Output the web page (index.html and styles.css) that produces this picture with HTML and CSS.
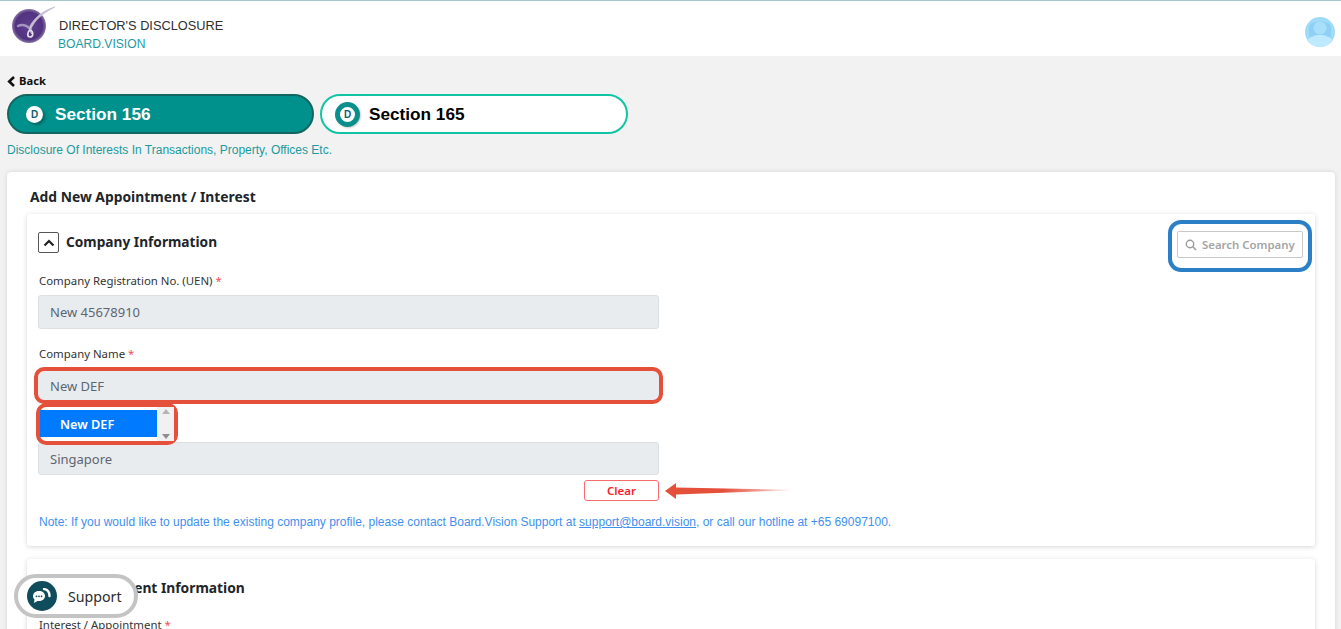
FILE: index.html
```html
<!DOCTYPE html>
<html lang="en">
<head>
  <meta charset="UTF-8" />
  <meta name="viewport" content="width=device-width, initial-scale=1.0" />
  <title>Director's Disclosure</title>
  <link rel="stylesheet" href="styles.css">
</head>
<body>
  <header class="topbar">
    <div class="brand">
      <svg class="logo" width="46" height="40" viewBox="0 0 46 40">
        <defs>
          <radialGradient id="orb" cx="50%" cy="50%" r="50%">
            <stop offset="0" stop-color="#5f3f8f" />
            <stop offset="0.8" stop-color="#523380" />
            <stop offset="1" stop-color="#8a76a6" />
          </radialGradient>
        </defs>
        <circle cx="18" cy="22" r="17" fill="url(#orb)" />
        <path d="M7 22 C11 20 16 21 19 25" fill="none" stroke="#a594bd" stroke-width="2.4" stroke-linecap="round" />
        <path d="M44 3 C33 6 24 13 19 22 C18 25 19 28 21 30 C19 27 20 24 22 21 C26 14 34 8 44 3 Z" fill="#c9bfd4" stroke="#c9bfd4" stroke-width="0.8" />
        <path d="M19 26 C16 28 16 33 19 33 C22 33 23 29 20 26" fill="none" stroke="#e6e0ec" stroke-width="1.7" />
      </svg>
      <div class="brand-text">
        <div class="brand-title">DIRECTOR'S DISCLOSURE</div>
        <div class="brand-sub">BOARD.VISION</div>
      </div>
    </div>
    <svg class="avatar" width="30" height="30" viewBox="0 0 30 30">
      <circle cx="15" cy="15" r="15" fill="#9fdcfa" />
      <path d="M4 9 C7 3 23 3 26 9 L26 20 L4 20 Z" fill="#8fd0f5" />
      <circle cx="15" cy="11" r="6.5" fill="#a8dff9" />
      <path d="M2 24 C6 19 10 18 15 18 C20 18 24 19 28 24 C24 28 20 30 15 30 C10 30 6 28 2 24 Z" fill="#bfe9fd" />
    </svg>
  </header>

  <main class="page">
    <a class="back"><svg width="9" height="11" viewBox="0 0 9 11"><path d="M7 1 L2.2 5.5 L7 10" fill="none" stroke="#111" stroke-width="2.6" /></svg>Back</a>

    <div class="tabs">
      <div class="tab tab-active"><span class="tab-dot">D</span>Section 156</div>
      <div class="tab"><span class="tab-dot">D</span>Section 165</div>
    </div>
    <p class="tab-note">Disclosure Of Interests In Transactions, Property, Offices Etc.</p>

    <section class="card">
      <h2 class="card-title">Add New Appointment / Interest</h2>

      <div class="panel">
        <div class="panel-head">
          <div class="panel-title">
            <span class="toggle"><svg width="12" height="8" viewBox="0 0 12 8"><path d="M1.5 6.5 L6 2 L10.5 6.5" fill="none" stroke="#222" stroke-width="2.2" /></svg></span>
            <h3>Company Information</h3>
          </div>
          <div class="search-ring">
            <div class="search">
              <svg width="12" height="12" viewBox="0 0 12 12"><circle cx="5" cy="5" r="3.7" fill="none" stroke="#9a9a9a" stroke-width="1.4" /><path d="M7.8 7.8 L11 11" stroke="#9a9a9a" stroke-width="1.6" /></svg>
              Search Company
            </div>
          </div>
        </div>

        <div class="field">
          <label>Company Registration No. (UEN) <i>*</i></label>
          <div class="input">New 45678910</div>
        </div>
        <div class="field field-name">
          <label>Company Name <i>*</i></label>
          <div class="input input-marked">New DEF</div>
          <div class="suggest">
            <div class="suggest-item">New DEF</div>
            <div class="suggest-scroll"><b class="up"></b><b class="down"></b></div>
          </div>
        </div>
        <div class="field">
          <label>&nbsp;</label>
          <div class="input input-short">Singapore</div>
        </div>
        <div class="actions">
          <button class="clear">Clear</button>
          <svg class="arrow" width="130" height="18" viewBox="0 0 130 18">
            <defs>
              <linearGradient id="fade" x1="0" x2="1" y1="0" y2="0">
                <stop offset="0" stop-color="#e4503a" />
                <stop offset="0.45" stop-color="#e4503a" />
                <stop offset="1" stop-color="#e4503a" stop-opacity="0.1" />
              </linearGradient>
            </defs>
            <path d="M0 9 L11 1 L11 5.5 L130 8 L11 12.5 L11 17 Z" fill="url(#fade)" />
          </svg>
        </div>
        <p class="note">Note: If you would like to update the existing company profile, please contact Board.Vision Support at <u>support@board.vision</u>, or call our hotline at +65 69097100.</p>
      </div>

      <div class="panel panel-next">
        <h3 class="next-title">Appointment Information</h3>
        <label class="next-label">Interest / Appointment <i>*</i></label>
      </div>
    </section>
  </main>

  <div class="support">
    <span class="support-icon">
      <svg width="20" height="16" viewBox="0 0 20 16">
        <path d="M7 3 C3 3 1 5.5 1 8 C1 9.5 1.5 10.5 2.5 11.5 L2 15 L5.5 13 C9.5 13.5 13 11.5 13 8 C13 5 10.5 3 7 3 Z" fill="#fff" />
        <circle cx="4.5" cy="8.3" r="0.9" fill="#0f4c5c" /><circle cx="7" cy="8.3" r="0.9" fill="#0f4c5c" /><circle cx="9.5" cy="8.3" r="0.9" fill="#0f4c5c" />
        <path d="M12 1 C15.5 1.5 17.5 4 17.5 8" fill="none" stroke="#fff" stroke-width="2.4" stroke-linecap="round" />
      </svg>
    </span>
    Support
  </div>
</body>
</html>
```

FILE: styles.css
```css
* {
  box-sizing: border-box;
}

html, body {
  height: 100%;
}

body {
  margin: 0;
  overflow: hidden;
  background-color: #f2f2f2;
  font-family: "Noto Sans", sans-serif;
  color: #212529;
}

i {
  font-style: normal;
  color: #e8505b;
}

/* top bar */
.topbar {
  height: 56px;
  padding: 0 6px 0 11px;
  display: flex;
  justify-content: space-between;
  align-items: center;
  background-color: #fff;
  border-top: 1px solid #a6c8ca;
}

.brand {
  display: flex;
  align-items: center;
}

.logo {
  margin: -9px 2px 0 0;
  flex: none;
}

.brand-text {
  font-family: "Liberation Sans", sans-serif;
  font-size: 12.8px;
  line-height: 18px;
  padding-top: 12px;
}

.brand-title {
  color: #2f2f2f;
}

.brand-sub {
  margin-left: -1px;
  font-size: 12.1px;
  color: #1f9aa3;
}

.avatar {
  margin-top: 6px;
}

/* page */
.page {
  padding: 0 6px 0 7px;
}

.back {
  height: 38px;
  padding-top: 12px;
  display: flex;
  align-items: center;
  gap: 3px;
  font-size: 11.2px;
  font-weight: 700;
  color: #111;
  line-height: 16px;
}

.tabs {
  display: flex;
  gap: 6px;
}

.tab {
  width: 308px;
  height: 40px;
  padding-left: 13px;
  padding-top: 1px;
  display: flex;
  align-items: center;
  gap: 9px;
  font-family: "Liberation Sans", sans-serif;
  font-size: 17.2px;
  font-weight: 700;
  color: #000;
  background-color: #fff;
  border: 2px solid #11c4a4;
  border-radius: 20px;
}

.tab-dot {
  width: 25px;
  height: 25px;
  display: flex;
  justify-content: center;
  align-items: center;
  font-size: 10px;
  color: #13606e;
  background-color: #fff;
  border: 5px solid #0a8f8c;
  border-radius: 50%;
  box-shadow: 1px 1px 2px rgba(0, 0, 0, 0.2);
}

.tab-active {
  width: 307px;
  color: #fff;
  background-color: #00918c;
  border-color: #13665f;
  padding-left: 17px;
  gap: 12px;
}

.tab-active .tab-dot {
  width: 17px;
  height: 17px;
  border: none;
  box-shadow: 2px 2px 3px rgba(0, 0, 0, 0.3);
}

.tab-note {
  margin: 9px 0 15px;
  font-family: "Liberation Sans", sans-serif;
  font-size: 12px;
  line-height: 14px;
  color: #1a9ba0;
}

/* cards */
.card {
  padding: 15px 20px 0;
  height: 500px;
  background-color: #fff;
  border-radius: 4px;
  box-shadow: 0 0 5px rgba(0, 0, 0, 0.12);
}

.card-title {
  margin: 0 0 7px 3px;
  font-size: 13.85px;
  font-weight: 700;
  line-height: 20px;
  color: #212529;
}

.panel {
  height: 332px;
  padding: 0 11px;
  background-color: #fff;
  border-radius: 3px;
  box-shadow: 0 1px 5px rgba(0, 0, 0, 0.16);
}

.panel-head {
  height: 59px;
  padding-top: 5px;
  display: flex;
  justify-content: space-between;
  align-items: flex-start;
  margin-right: -8px;
}

.panel-title {
  display: flex;
  align-items: center;
  gap: 7px;
  padding-top: 13px;
}

h3 {
  margin: -2px 0 0;
  font-size: 13.7px;
  font-weight: 700;
  line-height: 20px;
  color: #212529;
}

.toggle {
  width: 21px;
  height: 21px;
  display: flex;
  justify-content: center;
  align-items: center;
  border: 1px solid #555;
  border-radius: 2px;
}

/* blue marker ring drawn on the screenshot */
.search-ring {
  width: 144px;
  height: 52px;
  margin-top: 1px;
  padding: 7px 5px;
  border: 4px solid #2a7fc6;
  border-radius: 13px;
}

.search {
  height: 27px;
  display: flex;
  align-items: center;
  gap: 5px;
  padding-left: 7px;
  font-size: 11.4px;
  font-weight: 600;
  color: #a5a5a5;
  white-space: nowrap;
  border: 1px solid #c8c8c8;
  border-radius: 2px;
}

.field {
  width: 621px;
  margin-bottom: 17px;
  position: relative;
}

.field label,
.next-label {
  display: block;
  padding-left: 1px;
  font-size: 11.4px;
  line-height: 16px;
  margin-bottom: 6px;
  color: #333;
}

.input {
  height: 34px;
  padding-left: 11px;
  display: flex;
  align-items: center;
  font-size: 13px;
  color: #5c6670;
  background-color: #e9ecef;
  border: 1px solid #dde0e3;
  border-radius: 3px;
}

.input-short {
  height: 33px;
}

.field-name {
  margin-bottom: 18px;
}

/* red marker ring round the company name */
.input-marked {
  height: 37px;
  margin: -1px -4px -2px;
  padding-left: 12px;
  border: 4px solid #e4503a;
  border-radius: 10px;
  position: relative;
  z-index: 2;
}

.suggest {
  position: absolute;
  top: 57px;
  left: -2px;
  width: 142px;
  height: 42px;
  display: flex;
  background-color: #fff;
  border: 4px solid #e4503a;
  border-radius: 10px;
  z-index: 3;
}

.suggest-item {
  width: 117px;
  height: 27px;
  margin-top: 3px;
  padding: 1px 0 0 20px;
  display: flex;
  align-items: center;
  font-size: 12.7px;
  font-weight: 600;
  color: #fff;
  background-color: #007bff;
}

.suggest-scroll {
  flex: 1;
  display: flex;
  flex-direction: column;
  justify-content: space-between;
  align-items: center;
  padding: 2px 0;
  background-color: #f1f1f1;
}

.suggest-scroll b {
  width: 0;
  height: 0;
  border-left: 4px solid transparent;
  border-right: 4px solid transparent;
}

.suggest-scroll .up {
  border-bottom: 5px solid #b5b5b5;
}

.suggest-scroll .down {
  border-top: 5px solid #8e8e8e;
}

.actions {
  width: 621px;
  margin-top: -12px;
  display: flex;
  justify-content: flex-end;
  position: relative;
}

.clear {
  width: 75px;
  height: 21px;
  padding: 0;
  font-family: "Noto Sans", sans-serif;
  font-size: 11.5px;
  font-weight: 600;
  color: #f5222d;
  background-color: #fff;
  border: 1px solid #f76a70;
  border-radius: 3px;
}

.arrow {
  position: absolute;
  left: 627px;
  top: 2px;
}

.note {
  margin: 13px 0 0;
  padding-left: 1px;
  font-family: "Liberation Sans", sans-serif;
  font-size: 12px;
  line-height: 16px;
  color: #3f90f0;
}

.panel-next {
  margin-top: 13px;
  padding-top: 19px;
}

.next-title {
  margin-top: 0;
  margin-bottom: 19px;
  margin-left: 28px;
  font-size: 13.8px;
}

/* floating support pill */
.support {
  position: absolute;
  left: 14px;
  top: 574px;
  width: 124px;
  height: 44px;
  padding-left: 9px;
  display: flex;
  align-items: center;
  gap: 11px;
  font-size: 14.2px;
  color: #2b2b2b;
  background-color: #fff;
  border: 4px solid #c4c4c4;
  border-radius: 23px;
}

.support-icon {
  width: 30px;
  height: 30px;
  display: flex;
  justify-content: center;
  align-items: center;
  background-color: #0f4c5c;
  border-radius: 50%;
}
```
